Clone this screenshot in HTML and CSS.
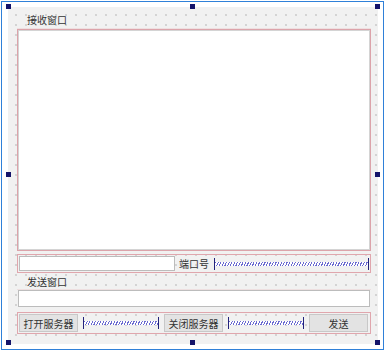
FILE: index.html
```
<!DOCTYPE html>
<html lang="zh-CN">
<head>
    <meta charset="UTF-8">
    <title>Server Form</title>
    <link rel="stylesheet" href="styles.css">
</head>
<body>
<div class="frame">
    <div class="form">
        <div class="caption">接收窗口</div>
        <div class="text-edit"></div>
        <div class="row port-row">
            <div class="line-edit port-input"></div>
            <div class="row-label">端口号</div>
            <div class="spacer"></div>
        </div>
        <div class="caption send-caption">发送窗口</div>
        <div class="line-edit send-input"></div>
        <div class="row button-row">
            <button class="btn">打开服务器</button>
            <div class="spacer"></div>
            <button class="btn">关闭服务器</button>
            <div class="spacer"></div>
            <button class="btn">发送</button>
        </div>
    </div>

    <!-- selection handles -->
    <span class="handle h-tl"></span>
    <span class="handle h-tm"></span>
    <span class="handle h-tr"></span>
    <span class="handle h-ml"></span>
    <span class="handle h-mr"></span>
    <span class="handle h-bl"></span>
    <span class="handle h-bm"></span>
    <span class="handle h-br"></span>
</div>
</body>
</html>
```

FILE: styles.css
```
/* Page */
body {
    margin: 0;
    background: #fff;
    font-family: "Noto Sans CJK SC", "Noto Sans", sans-serif;
    font-size: 10px;
    color: #333;
}

/* Outer selection frame */
.frame {
    position: relative;
    margin: 1px;
    width: 383px;
    height: 349px;
    box-sizing: border-box;
    border: 1px solid #2f80d8;
    padding: 5px 5px 5px 6px;
}

/* Designer form with dot grid */
.form {
    height: 100%;
    box-sizing: border-box;
    padding: 3px 7px 9px 9px;
    background-color: #f1f1f1;
    background-image: radial-gradient(circle, #d2d2d2 0.7px, transparent 0.9px);
    background-size: 10px 10px;
    background-position: 3px 3px;
    display: flex;
    flex-direction: column;
}

.caption {
    height: 19px;
    line-height: 19px;
    padding-left: 10px;
    border-bottom: 1px solid #eedfe0;
    box-sizing: border-box;
}

.send-caption {
    height: 17px;
    line-height: 17px;
}

.text-edit {
    height: 222px;
    box-sizing: border-box;
    background: #fff;
    border: 1px solid #dca3aa;
    box-shadow: inset 0 0 0 1px #d4d4d4;
}

/* Layout rows (red layout outline) */
.row {
    display: flex;
    align-items: center;
    box-sizing: border-box;
    border: 1px solid #e0a6ad;
}

.port-row {
    height: 19px;
    margin-top: 3px;
    padding: 0 1px;
    gap: 4px;
}

.button-row {
    height: 22px;
    margin-top: 5px;
    padding: 0 2px 0 1px;
    gap: 5px;
}

.line-edit {
    background: #fff;
    box-sizing: border-box;
    border: 1px solid #bcbcbc;
}

.port-input {
    width: 156px;
    height: 15px;
}

.row-label {
    width: 30px;
    white-space: nowrap;
}

.send-input {
    height: 17px;
    margin: 0 1px;
}

/* Horizontal spacer drawn like the designer's blue spring */
.spacer {
    flex: 1;
    height: 12px;
    box-sizing: border-box;
    border-left: 1px solid #22227a;
    border-right: 1px solid #22227a;
    background-image: repeating-linear-gradient(115deg, #6a6ad0 0 1px, #fff 1px 2.5px);
    background-size: 100% 4px;
    background-position: 0 4px;
    background-repeat: no-repeat;
}

.port-row .spacer {
    margin-left: 1px;
}

.btn {
    width: 59px;
    height: 18px;
    padding: 0;
    font-family: inherit;
    font-size: 10px;
    color: #333;
    background: #e3e3e3;
    border: 1px solid #c8c8c8;
    box-sizing: border-box;
}

.button-row .spacer {
    width: 76px;
    flex: none;
}

/* Selection handles */
.handle {
    position: absolute;
    width: 5px;
    height: 5px;
    background: #14146a;
}

.h-tl { left: 4px; top: 2px; }
.h-tm { left: 188px; top: 2px; }
.h-tr { left: 373px; top: 2px; }
.h-ml { left: 4px; top: 170px; }
.h-mr { left: 373px; top: 170px; }
.h-bl { left: 4px; top: 338px; }
.h-bm { left: 188px; top: 338px; }
.h-br { left: 373px; top: 338px; }
```
